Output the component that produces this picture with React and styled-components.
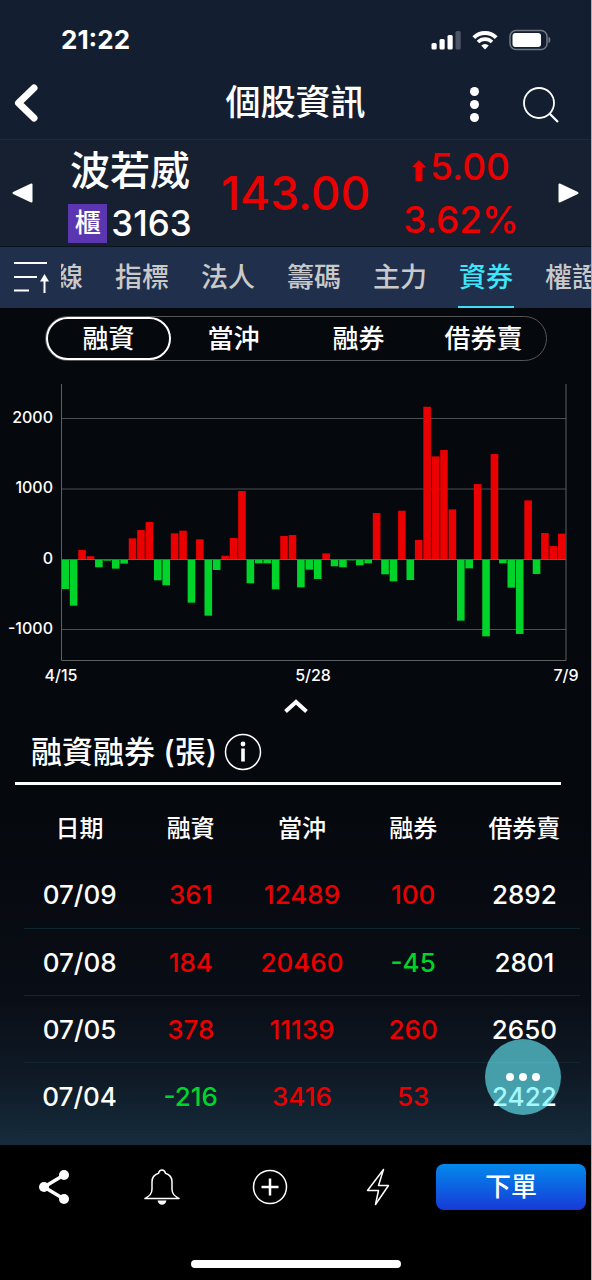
import React, { useLayoutEffect, useRef } from "react";
import styled, { createGlobalStyle } from "styled-components";

const RED = "#ea0000";
const GREEN = "#00d42a";

const GlobalStyle = createGlobalStyle`
  *, *::before, *::after { box-sizing: border-box; }
  body { margin: 0; background: #000; }
  button { font: inherit; color: inherit; background: none; border: 0; padding: 0; cursor: pointer; }
  svg { display: block; flex: none; }
`;

const Screen = styled.div`
  min-height: 100vh;
  display: flex;
  flex-direction: column;
  overflow: hidden;
  color: #fff;
  background: #000;
  border-right: 1px solid #a9adb3;
  font-family: Inter, "Noto Sans CJK TC", sans-serif;
  font-weight: 500;
`;

const Top = styled.header`
  background: #131e31;
  border-bottom: 1px solid #07324d;
`;

const StatusBar = styled.div`
  display: flex;
  align-items: center;
  justify-content: space-between;
  height: 68px;
  padding: 12px 40px 0 61px;
  font-size: 26px;
  line-height: 32px;
  font-weight: 700;
`;

const StatusIcons = styled.div`
  display: flex;
  align-items: center;
  gap: 11px;
`;

const NavBar = styled.div`
  display: grid;
  grid-template-columns: 1fr auto 1fr;
  align-items: center;
  height: 71px;
  padding: 2px 14px 0;
`;

const NavTitle = styled.h1`
  margin: 0;
  padding-bottom: 5px;
  font-size: 35px;
  line-height: 48px;
  font-weight: 500;
`;

const NavActions = styled.div`
  display: flex;
  align-items: center;
  justify-content: flex-end;
  gap: 44px;
  padding-right: 18px;
`;

const Quote = styled.section`
  display: grid;
  grid-template-columns: auto 1fr auto 1fr auto;
  align-items: center;
  height: 107px;
  padding: 0 12px;
  background: #162031;
  border-bottom: 1px solid #0b1320;
`;

const Stock = styled.div`
  display: flex;
  flex-direction: column;
  align-items: center;
  gap: 4px;
  padding-left: 6px;
`;

const StockName = styled.h2`
  margin: 0;
  font-size: 40px;
  line-height: 56px;
  font-weight: 500;
`;

const StockCode = styled.div`
  display: flex;
  align-items: center;
  gap: 4px;
  font-size: 35px;
  line-height: 40px;
`;

const Market = styled.span`
  width: 39px;
  height: 39px;
  background: #5c36b0;
  font-size: 26px;
  line-height: 38px;
  text-align: center;
`;

const Price = styled.strong`
  color: ${RED};
  font-size: 46px;
  line-height: 56px;
  font-weight: 500;
`;

const Change = styled.div`
  display: flex;
  flex-direction: column;
  align-items: center;
  padding-right: 6px;
  color: ${RED};
  font-size: 37px;
  line-height: 53px;
`;

const ChangeLine = styled.span`
  display: flex;
  align-items: center;
  gap: 4px;

  svg { margin-top: 8px; }
`;

const TabBar = styled.nav`
  display: flex;
  align-items: center;
  height: 61px;
  padding-left: 13px;
  gap: 12px;
  background: #202f4c;
`;

const TabScroller = styled.div`
  display: flex;
  flex: 1;
  gap: 30px;
  height: 100%;
  overflow-x: auto;
  scrollbar-width: none;
`;

const Tab = styled.button`
  flex: none;
  width: 56px;
  height: 100%;
  padding-top: 3px;
  border-bottom: 2px solid ${(p) => (p.$active ? "#3fe0f5" : "transparent")};
  color: ${(p) => (p.$active ? "#3fe6fa" : "#c9c9c9")};
  font-size: 27px;
  line-height: 40px;
  white-space: nowrap;
`;

const Content = styled.main`
  position: relative;
  flex: 1;
  padding-bottom: 14px;
  background: linear-gradient(180deg, #05080c 0%, #05080d 60%, #090d15 82%, #0f1a26 92%, #162c3d 100%);
`;

const Segments = styled.div`
  display: grid;
  grid-template-columns: repeat(4, 1fr);
  height: 45px;
  margin: 8px 44px 0 45px;
  border: 1px solid #555;
  border-radius: 23px;
`;

const Segment = styled.button`
  border: 2px solid ${(p) => (p.$active ? "#fff" : "transparent")};
  border-radius: 22px;
  font-size: 26px;
  line-height: 38px;
  white-space: nowrap;
`;

const Chart = styled.svg`
  width: 100%;
  height: auto;
  margin-top: 23px;
  font-size: 16px;
  font-weight: 500;
`;

const Collapse = styled.button`
  display: block;
  margin: 7px auto 0;
  padding: 7px 12px;
`;

const SectionHead = styled.div`
  display: flex;
  align-items: center;
  gap: 7px;
  margin: 9px 30px 0 15px;
  padding: 0 0 7px 16px;
  border-bottom: 3px solid #fff;
`;

const SectionTitle = styled.h3`
  margin: 0;
  font-size: 31px;
  line-height: 46px;
  font-weight: 500;
`;

const Table = styled.table`
  width: calc(100% - 35px);
  margin: 9px 11px 0 24px;
  border-collapse: collapse;
  table-layout: fixed;
`;

const HeadCell = styled.th`
  height: 67px;
  padding: 2px 0 0;
  font-size: 24px;
  line-height: 36px;
  font-weight: 500;
`;

const Cell = styled.td`
  height: 67px;
  padding: 2px 0 0;
  border-bottom: 1px solid #142532;
  color: ${(p) => p.$color || "#fff"};
  font-size: 26px;
  line-height: 32px;
  text-align: center;
`;

const Floating = styled.button`
  position: absolute;
  right: 30px;
  bottom: 30px;
  display: flex;
  align-items: center;
  justify-content: center;
  gap: 5px;
  width: 76px;
  height: 76px;
  border-radius: 50%;
  background: rgba(105, 243, 255, 0.61);
`;

const Dot = styled.span`
  width: ${(p) => p.$size}px;
  height: ${(p) => p.$size}px;
  border-radius: 50%;
  background: #fff;
`;

const MoreButton = styled.button`
  display: flex;
  flex-direction: column;
  gap: 4px;
`;

const BottomBar = styled.footer`
  display: flex;
  flex-direction: column;
  align-items: center;
  justify-content: space-between;
  height: 135px;
  padding: 19px 0 12px;
`;

const Actions = styled.div`
  display: flex;
  align-items: center;
  width: 100%;
  padding-right: 5px;
`;

const ActionIcons = styled.div`
  display: grid;
  grid-template-columns: repeat(4, 1fr);
  flex: 1;
  justify-items: center;
  padding-right: 4px;
`;

const OrderButton = styled.button`
  width: 150px;
  height: 46px;
  border-radius: 8px;
  background: linear-gradient(180deg, #028aec, #183ad8);
  font-size: 26px;
  line-height: 38px;
`;

const HomeIndicator = styled.div`
  width: 210px;
  height: 8px;
  border-radius: 4px;
  background: #fff;
`;

const values = [
  -427, -664, 128, 40, -118, -24, -137, -66, 294, 412, 526, -303, -374, 365, 403,
  -621, 280, -806, -156, 47, 299, 967, -346, -62, -62, -431, 327, 341, -403, -152,
  -284, 80, -104, -118, -20, -90, -62, 654, -218, -318, 687, -299, 270, 2166, 1460,
  1550, 706, -877, -133, 1066, -1100, 1493, -62, -408, -1066, 834, -213, 370, 184, 361,
];

const tabs = ["日線", "指標", "法人", "籌碼", "主力", "資券", "權證"];
const segments = ["融資", "當沖", "融券", "借券賣"];
const columns = ["日期", "融資", "當沖", "融券", "借券賣"];
const rows = [
  ["07/09", 361, 12489, 100, 2892],
  ["07/08", 184, 20460, -45, 2801],
  ["07/05", 378, 11139, 260, 2650],
  ["07/04", -216, 3416, 53, 2422],
];

const cellColor = (value, column) => {
  if (column === 0 || column === 4) return undefined;
  return value < 0 ? GREEN : RED;
};

function StatusGlyphs() {
  return (
    <StatusIcons>
      <svg width="30" height="20" viewBox="0 0 30 20" fill="#fff">
        <rect x="0.500" y="13" width="5.2" height="6.500" rx="1.5" />
        <rect x="8.500" y="9" width="5.2" height="10.500" rx="1.5" />
        <rect x="16.500" y="5" width="5.2" height="14.500" rx="1.5" />
        <rect x="24.500" y="1" width="5.2" height="18.500" rx="1.5" opacity="0.25" />
      </svg>
      <svg width="26" height="19" viewBox="0 0 26 19" fill="none" stroke="#fff">
        <path d="M1.800 6.600a16 16 0 0 1 22.400 0" strokeWidth="4" />
        <path d="M6 11a10 10 0 0 1 14 0" strokeWidth="3.600" />
        <path d="M9.200 14.600a5.400 5.400 0 0 1 7.600 0L13 18.600z" fill="#fff" stroke="none" />
      </svg>
      <svg width="42" height="22" viewBox="0 0 42 22">
        <rect x="1" y="1.500" width="37" height="19" rx="6" fill="none" stroke="#fff" strokeOpacity="0.4" strokeWidth="1.500" />
        <rect x="3.500" y="4" width="28.500" height="14" rx="3" fill="#fff" />
        <path d="M39.500 7.800c2.400 1 2.400 5.400 0 6.400z" fill="#fff" fillOpacity="0.45" />
      </svg>
    </StatusIcons>
  );
}

function MarginChart() {
  const left = 61;
  const right = 566;
  const zero = 175;
  const scale = 0.0703;
  const step = (right - left) / values.length;
  return (
    <Chart viewBox="0 0 591 301" role="img" aria-label="融資">
      <g stroke="#4c4f52" strokeWidth="1">
        {[34.5, 105, 245.5].map((y) => (
          <path key={y} d={`M${left} ${y}H${right}`} />
        ))}
      </g>
      {values.map((value, i) => {
        const size = Math.abs(value) * scale;
        return (
          <rect
            key={i}
            x={left + i * step + 0.4}
            y={value > 0 ? zero - size : zero}
            width={step - 0.8}
            height={size}
            fill={value > 0 ? RED : GREEN}
          />
        );
      })}
      <path d={`M${left} ${zero + 0.5}H${right}`} stroke="#5b6063" />
      <path d={`M${left + 0.5} 0V276.500H${right}V0`} fill="none" stroke="#5b6063" />
      <g fill="#fff" textAnchor="end">
        <text x="53" y="39">2000</text>
        <text x="53" y="109">1000</text>
        <text x="53" y="180">0</text>
        <text x="53" y="250">-1000</text>
      </g>
      <g fill="#fff" textAnchor="middle">
        <text x="61" y="297">4/15</text>
        <text x="313" y="297">5/28</text>
        <text x="566" y="297">7/9</text>
      </g>
    </Chart>
  );
}

function Tabs() {
  const scroller = useRef(null);
  useLayoutEffect(() => {
    scroller.current.scrollLeft = 33;
  }, []);
  return (
    <TabBar>
      <button aria-label="排序">
        <svg width="36" height="34" viewBox="0 0 36 34" fill="none" stroke="#fff" strokeWidth="2">
          <path d="M1 2h33M1 16h23M1 29.500h15" />
          <path d="M31.500 32V18" />
          <path d="M27 20.500l4.500-7.500 4.500 7.500z" fill="#fff" stroke="none" />
        </svg>
      </button>
      <TabScroller ref={scroller}>
        {tabs.map((tab) => (
          <Tab key={tab} $active={tab === "資券"}>{tab}</Tab>
        ))}
      </TabScroller>
    </TabBar>
  );
}

export default function App() {
  return (
    <Screen>
      <GlobalStyle />
      <Top>
        <StatusBar>
          <span>21:22</span>
          <StatusGlyphs />
        </StatusBar>
        <NavBar>
          <div>
            <button aria-label="返回">
              <svg width="26" height="40" viewBox="0 0 26 40" fill="none" stroke="#fff" strokeWidth="7" strokeLinecap="round" strokeLinejoin="round">
                <path d="M20 5L4.500 20 20 35" />
              </svg>
            </button>
          </div>
          <NavTitle>個股資訊</NavTitle>
          <NavActions>
            <MoreButton aria-label="更多">
              <Dot $size={9} />
              <Dot $size={9} />
              <Dot $size={9} />
            </MoreButton>
            <button aria-label="搜尋">
              <svg width="36" height="36" viewBox="0 0 36 36" fill="none" stroke="#fff" strokeWidth="1.800">
                <circle cx="16" cy="16" r="15" />
                <path d="M26.500 26.500L35 35" strokeWidth="2.200" />
              </svg>
            </button>
          </NavActions>
        </NavBar>
      </Top>
      <Quote>
        <button aria-label="上一檔">
          <svg width="21" height="20" viewBox="0 0 21 20">
            <path d="M1.500 10L19.500 1.500v17z" fill="#fff" stroke="#fff" strokeWidth="2" strokeLinejoin="round" />
          </svg>
        </button>
        <Stock>
          <StockName>波若威</StockName>
          <StockCode>
            <Market>櫃</Market>
            3163
          </StockCode>
        </Stock>
        <Price>143.00</Price>
        <Change>
          <ChangeLine>
            <svg width="14" height="21" viewBox="0 0 14 21" fill={RED}>
              <path d="M7 0l7 7h-3.500v14h-7V7H0z" />
            </svg>
            5.00
          </ChangeLine>
          <ChangeLine>3.62%</ChangeLine>
        </Change>
        <button aria-label="下一檔">
          <svg width="21" height="20" viewBox="0 0 21 20">
            <path d="M19.500 10L1.500 1.500v17z" fill="#fff" stroke="#fff" strokeWidth="2" strokeLinejoin="round" />
          </svg>
        </button>
      </Quote>
      <Tabs />
      <Content>
        <Segments>
          {segments.map((name, i) => (
            <Segment key={name} $active={i === 0}>{name}</Segment>
          ))}
        </Segments>
        <MarginChart />
        <Collapse aria-label="收合">
          <svg width="24" height="14" viewBox="0 0 24 14" fill="none" stroke="#fff" strokeWidth="4">
            <path d="M1.500 12.500L12 3l10.500 9.500" />
          </svg>
        </Collapse>
        <SectionHead>
          <SectionTitle>融資融券 (張)</SectionTitle>
          <button aria-label="說明">
            <svg width="38" height="38" viewBox="0 0 38 38" fill="none" stroke="#fff">
              <circle cx="19" cy="19" r="17.500" strokeWidth="1.500" />
              <path d="M19 15.500v13" strokeWidth="3.600" />
              <circle cx="19" cy="11" r="2.400" fill="#fff" stroke="none" />
            </svg>
          </button>
        </SectionHead>
        <Table>
          <thead>
            <tr>
              {columns.map((name) => (
                <HeadCell key={name} scope="col">{name}</HeadCell>
              ))}
            </tr>
          </thead>
          <tbody>
            {rows.map((row) => (
              <tr key={row[0]}>
                {row.map((value, i) => (
                  <Cell key={i} $color={cellColor(value, i)}>{value}</Cell>
                ))}
              </tr>
            ))}
          </tbody>
        </Table>
        <Floating aria-label="更多功能">
          <Dot $size={8} />
          <Dot $size={8} />
          <Dot $size={8} />
        </Floating>
      </Content>
      <BottomBar>
        <Actions>
          <ActionIcons>
            <button aria-label="分享">
              <svg width="32" height="36" viewBox="0 0 32 36" fill="#fff">
                <path d="M26 6L6 18l20 12" fill="none" stroke="#fff" strokeWidth="3.500" />
                <circle cx="26" cy="6" r="5" />
                <circle cx="6" cy="18" r="5" />
                <circle cx="26" cy="30" r="5" />
              </svg>
            </button>
            <button aria-label="提醒">
              <svg width="36" height="36" viewBox="0 0 36 36" fill="none" stroke="#fff" strokeWidth="1.500" strokeLinejoin="round">
                <path d="M1 29.500h34c-4-2.500-7-4-7-9.500v-7c0-4-2.500-7.500-6.500-8.700C21 2 20 1 18 1s-3 1-3.500 3.300C10.500 5.500 8 9 8 13v7c0 5.500-3 7-7 9.500z" />
                <path d="M13.500 31.500h9c-.8 3-2.500 4.300-4.500 4.300s-3.700-1.300-4.500-4.300z" fill="#fff" stroke="none" />
              </svg>
            </button>
            <button aria-label="加入">
              <svg width="36" height="36" viewBox="0 0 36 36" fill="none" stroke="#fff">
                <circle cx="18" cy="18" r="16.500" strokeWidth="1.500" />
                <path d="M18 9.500v17M9.500 18h17" strokeWidth="2.500" />
              </svg>
            </button>
            <button aria-label="閃電下單">
              <svg width="24" height="38" viewBox="0 0 24 38" fill="none" stroke="#fff" strokeWidth="1.500" strokeLinejoin="round">
                <path d="M17.500 1.500L1.500 22.500h11L9.500 36.500 22.500 17.500h-10z" />
              </svg>
            </button>
          </ActionIcons>
          <OrderButton>下單</OrderButton>
        </Actions>
        <HomeIndicator />
      </BottomBar>
    </Screen>
  );
}
